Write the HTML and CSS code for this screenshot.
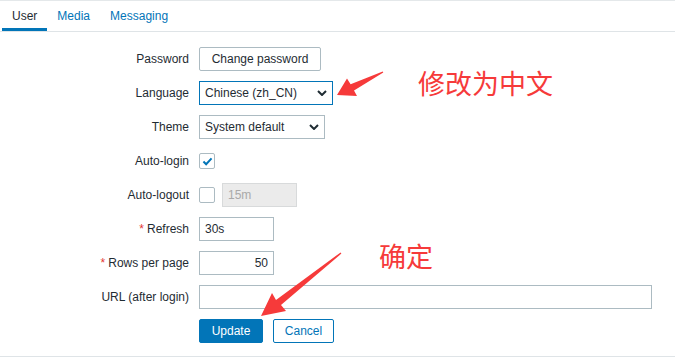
FILE: index.html
```html
<!DOCTYPE html>
<html lang="en">
  <head>
    <meta charset="UTF-8" />
    <title>User profile</title>
    <link rel="stylesheet" href="styles.css">
  </head>
  <body>
    <div class="page">
      <ul class="tabs">
        <li class="tab active">User</li>
        <li class="tab">Media</li>
        <li class="tab">Messaging</li>
      </ul>

      <form class="form-grid">
        <label class="label">Password</label>
        <div class="field">
          <button type="button" class="btn btn-alt w-pass">Change password</button>
        </div>

        <label class="label">Language</label>
        <div class="field">
          <div class="select focused w-lang">
            <span>Chinese (zh_CN)</span>
            <svg class="chevron" viewBox="0 0 10 6"><path d="M1 1l4 4 4-4" /></svg>
          </div>
        </div>

        <label class="label">Theme</label>
        <div class="field">
          <div class="select w-theme">
            <span>System default</span>
            <svg class="chevron" viewBox="0 0 10 6"><path d="M1 1l4 4 4-4" /></svg>
          </div>
        </div>

        <label class="label">Auto-login</label>
        <div class="field">
          <span class="checkbox">
            <svg class="tick" viewBox="0 0 12 10"><path d="M1.5 5l3 3 6-6.5" /></svg>
          </span>
        </div>

        <label class="label">Auto-logout</label>
        <div class="field">
          <span class="checkbox"></span>
          <input class="input disabled w-short" value="15m" disabled />
        </div>

        <label class="label"><span class="req">*</span> Refresh</label>
        <div class="field">
          <input class="input w-short" value="30s" />
        </div>

        <label class="label"><span class="req">*</span> Rows per page</label>
        <div class="field">
          <input class="input w-short align-right" value="50" />
        </div>

        <label class="label">URL (after login)</label>
        <div class="field">
          <input class="input w-url" value="" />
        </div>

        <div></div>
        <div class="field buttons">
          <button type="button" class="btn btn-main">Update</button>
          <button type="button" class="btn btn-cancel">Cancel</button>
        </div>
      </form>

      <!-- annotations drawn on top of the screenshot -->
      <svg class="annotations" viewBox="0 0 675 359">
        <polygon points="337,95 357,96 354,90.5 383.3,72.6 382.7,71.4 350.6,84.3 347,78.5" />
        <polygon points="261,316 286,311 281,305 341.4,253.6 340.6,252.4 276,300 272,293" />
      </svg>
      <div class="note note-lang">修改为中文</div>
      <div class="note note-ok">确定</div>
    </div>
  </body>
</html>
```

FILE: styles.css
```css
* {
  margin: 0;
  padding: 0;
  box-sizing: border-box;
}

body {
  font-family: "Liberation Sans", Arial, sans-serif;
  font-size: 12px;
  color: #1f2c33;
  background: #ffffff;
}

.page {
  position: relative;
  width: 675px;
  height: 359px;
  border-top: 1px solid #e4e8ea;
  overflow: hidden;
}

.tabs {
  display: flex;
  list-style: none;
  padding-left: 2px;
  border-bottom: 1px solid #dfe4e7;
}

.tab {
  height: 30px;
  line-height: 30px;
  padding: 0 10px;
  color: #0275b8;
}

.tab.active {
  color: #1f2c33;
  box-shadow: inset 0 -3px 0 #0275b8;
}

.form-grid {
  display: grid;
  grid-template-columns: 189px 1fr;
  grid-auto-rows: 24px;
  column-gap: 10px;
  row-gap: 10px;
  padding-top: 15px;
  padding-bottom: 13px;
  border-bottom: 1px solid #dfe4e7;
}

.label {
  display: flex;
  align-items: center;
  justify-content: flex-end;
  white-space: nowrap;
}

.req {
  color: #e33734;
  margin-right: 3px;
}

.field {
  display: flex;
  align-items: center;
  gap: 7px;
}

.btn {
  height: 24px;
  font-family: inherit;
  font-size: 12px;
  border-radius: 2px;
  cursor: pointer;
}

.btn-alt {
  background: #ffffff;
  border: 1px solid #acbbc2;
  color: #1f2c33;
}

.w-pass {
  width: 122px;
}

.select {
  display: flex;
  align-items: center;
  justify-content: space-between;
  height: 24px;
  padding: 0 5px;
  border: 1px solid #acbbc2;
  background: #ffffff;
}

.select.focused {
  border-color: #0275b8;
}

.w-lang {
  width: 134px;
}

.w-theme {
  width: 126px;
}

.chevron {
  width: 10px;
  height: 6px;
  fill: none;
  stroke: #1f2c33;
  stroke-width: 2;
}

.checkbox {
  display: flex;
  align-items: center;
  justify-content: center;
  width: 16px;
  height: 16px;
  border: 1px solid #acbbc2;
  border-radius: 2px;
  background: #ffffff;
}

.tick {
  width: 11px;
  height: 9px;
  fill: none;
  stroke: #0275b8;
  stroke-width: 2.2;
}

.input {
  height: 24px;
  padding: 0 5px;
  border: 1px solid #acbbc2;
  font-family: inherit;
  font-size: 12px;
  color: #1f2c33;
  background: #ffffff;
  outline: none;
}

.input.disabled {
  background: #ebebeb;
  border-color: #d8dadb;
  color: #a9a9a9;
}

.w-short {
  width: 75px;
}

.w-url {
  width: 453px;
}

.align-right {
  text-align: right;
}

.buttons {
  gap: 10px;
}

.btn-main {
  width: 64px;
  background: #0275b8;
  border: 1px solid #0275b8;
  color: #ffffff;
}

.btn-cancel {
  width: 61px;
  background: #ffffff;
  border: 1px solid #0275b8;
  color: #0275b8;
}

.annotations {
  position: absolute;
  top: -1px;
  left: 0;
  width: 675px;
  height: 359px;
  fill: #f63a3a;
  pointer-events: none;
}

.note {
  position: absolute;
  font-family: "Noto Sans CJK SC", sans-serif;
  font-size: 27px;
  line-height: 1;
  color: #f63a3a;
  white-space: nowrap;
}

.note-lang {
  left: 418px;
  top: 68px;
}

.note-ok {
  left: 379px;
  top: 241px;
}
```
